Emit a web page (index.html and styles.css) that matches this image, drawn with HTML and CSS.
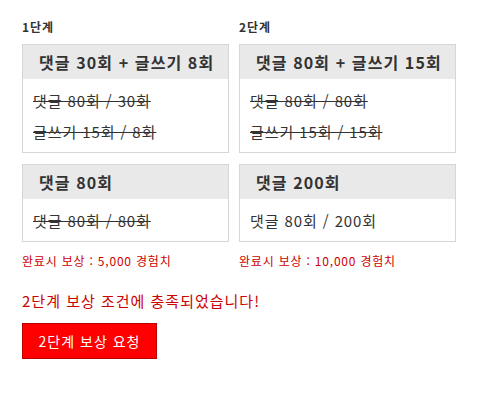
FILE: index.html
```html
<!DOCTYPE html>
<html lang="ko">
<head>
    <meta charset="UTF-8">
    <title>단계 보상</title>
    <link rel="stylesheet" href="styles.css">
</head>
<body>
    <div class="wrap">
        <div class="stages">
            <div class="stage">
                <div class="stage_title">1단계</div>
                <div class="mission">
                    <div class="mission_head">댓글 30회 + 글쓰기 8회</div>
                    <ul class="mission_list">
                        <li class="done">댓글 80회 / 30회</li>
                        <li class="done">글쓰기 15회 / 8회</li>
                    </ul>
                </div>
                <div class="mission">
                    <div class="mission_head">댓글 80회</div>
                    <ul class="mission_list">
                        <li class="done">댓글 80회 / 80회</li>
                    </ul>
                </div>
                <div class="reward">완료시 보상 : 5,000 경험치</div>
            </div>
            <div class="stage">
                <div class="stage_title">2단계</div>
                <div class="mission">
                    <div class="mission_head">댓글 80회 + 글쓰기 15회</div>
                    <ul class="mission_list">
                        <li class="done">댓글 80회 / 80회</li>
                        <li class="done">글쓰기 15회 / 15회</li>
                    </ul>
                </div>
                <div class="mission">
                    <div class="mission_head">댓글 200회</div>
                    <ul class="mission_list">
                        <li>댓글 80회 / 200회</li>
                    </ul>
                </div>
                <div class="reward">완료시 보상 : 10,000 경험치</div>
            </div>
        </div>
        <p class="notice">2단계 보상 조건에 충족되었습니다!</p>
        <button class="req_btn">2단계 보상 요청</button>
    </div>
</body>
</html>
```

FILE: styles.css
```css
body{
    margin: 0;
    font-family: "Noto Sans CJK KR", "Noto Sans", sans-serif;
    color: #333;
    background: #fff;
}

.wrap{
    padding: 19px 22px;
}

.stages{
    display: grid;
    grid-template-columns: 207px 217px;
    gap: 10px;
}

.stage_title{
    font-size: 12px;
    font-weight: bold;
    letter-spacing: 1px;
    line-height: 16px;
    margin-bottom: 9px;
}

.mission{
    border: 1px solid #d6d6d6;
    margin-bottom: 11px;
}

.mission_head{
    background: #e9e9e9;
    height: 34px;
    line-height: 34px;
    padding-left: 16px;
    font-size: 16px;
    font-weight: bold;
    letter-spacing: 1.1px;
    white-space: nowrap;
}

.mission_list{
    list-style: none;
    margin: 0;
    padding: 6px 10px 5px;
}

.mission_list li{
    font-size: 15px;
    letter-spacing: 0.9px;
    line-height: 31px;
}

.mission_list li.done{
    text-decoration: line-through;
}

.reward{
    color: #c00;
    font-size: 12px;
    letter-spacing: 0.8px;
    line-height: 16px;
    margin-top: 2px;
}

.notice{
    color: #c00;
    font-size: 15px;
    letter-spacing: 1px;
    margin: 22px 0 12px;
    line-height: 20px;
}

.req_btn{
    background: #f00;
    border: 1px solid #b00;
    color: #fff;
    font-family: "Noto Sans CJK KR", sans-serif;
    font-size: 14px;
    letter-spacing: 1px;
    width: 135px;
    height: 36px;
    padding: 0;
}
```
